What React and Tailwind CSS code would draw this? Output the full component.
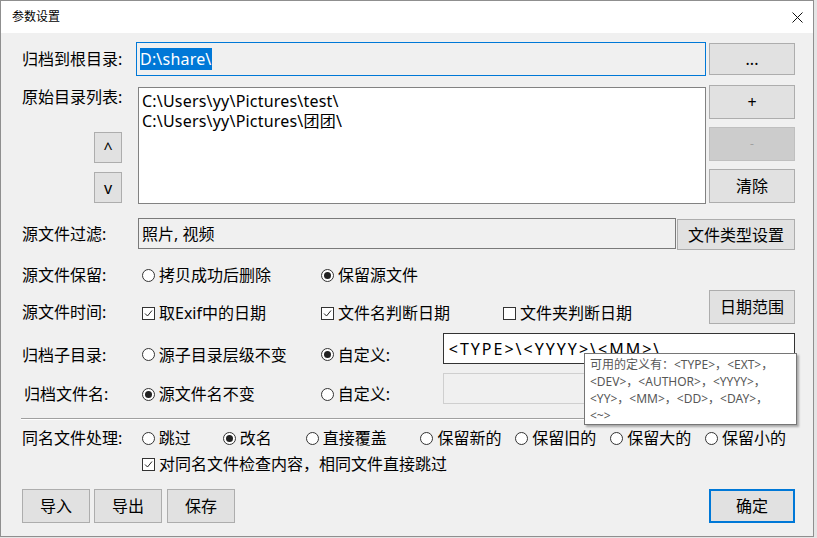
import React from 'react';

const font = { fontFamily: '"Noto Sans", "Noto Sans CJK SC", sans-serif' };

const Btn = ({ children, className = '' }) => (
  <div className={`flex items-center justify-center bg-[#e1e1e1] border border-[#adadad] text-[16px] text-black ${className}`}>
    {children}
  </div>
);

const Radio = ({ checked }) => (
  <span className="w-[13px] h-[13px] rounded-full border border-[#333] bg-white flex items-center justify-center shrink-0">
    {checked && <span className="w-[7px] h-[7px] rounded-full bg-[#222]" />}
  </span>
);

const Check = ({ checked }) => (
  <span className="w-[13px] h-[13px] border border-[#333] bg-white flex items-center justify-center shrink-0">
    {checked && (
      <svg width="11" height="11" viewBox="0 0 11 11">
        <path d="M2 5.5 L4.5 8 L9 2.5" fill="none" stroke="#222" strokeWidth="1" />
      </svg>
    )}
  </span>
);

const Opt = ({ type = 'radio', checked, label, w }) => (
  <div className={`flex items-center gap-[4px] leading-[20px] ${w}`}>
    {type === 'radio' ? <Radio checked={checked} /> : <Check checked={checked} />}
    <span>{label}</span>
  </div>
);

export default function App() {
  return (
    <div className="relative w-[817px] h-[538px] bg-[#e5e5e5] text-black text-[16px]" style={font}>
      <div className="w-[814px] h-[537px] border border-[#8f8f8f] bg-[#f0f0f0] flex flex-col">
        {/* title bar */}
        <div className="h-[32px] bg-white flex items-center justify-between pl-[11px] pr-[10px] shrink-0">
          <span className="text-[12px]">参数设置</span>
          <svg width="11" height="11" viewBox="0 0 11 11">
            <path d="M0.5 0.5 L10.5 10.5 M10.5 0.5 L0.5 10.5" stroke="#111" strokeWidth="1" />
          </svg>
        </div>

        <div className="flex flex-col pl-[21px] pr-[18px]">
          {/* root dir */}
          <div className="flex h-[34px] mt-[9px]">
            <div className="w-[114px] flex items-center">归档到根目录:</div>
            <div className="w-[570px] h-[34px] border border-[#0078d7] bg-[#f0f0f0] flex items-center pl-[3px]">
              <span className="bg-[#0078d7] text-white leading-[22px] tracking-[0.2px]">D:\share\</span>
            </div>
            <Btn className="ml-[3px] w-[86px] h-[32px] mt-[1px]">...</Btn>
          </div>

          {/* source list */}
          <div className="flex mt-[11px]">
            <div className="w-[116px] flex flex-col">
              <span className="leading-[20px]">原始目录列表:</span>
              <Btn className="ml-[72px] mt-[25px] w-[28px] h-[31px] text-[13px]">^</Btn>
              <Btn className="ml-[72px] mt-[9px] w-[28px] h-[31px] text-[14px]">v</Btn>
            </div>
            <div className="w-[568px] h-[117px] border border-[#828282] bg-white px-[3px] pt-[3px] leading-[20px] tracking-[0.2px]">
              <div>C:\Users\yy\Pictures\test\</div>
              <div>C:\Users\yy\Pictures\团团\</div>
            </div>
            <div className="ml-[3px] w-[86px] mt-[-2px] flex flex-col gap-[8px]">
              <Btn className="h-[34px]">+</Btn>
              <div className="h-[34px] bg-[#cccccc] border border-[#bfbfbf] text-[#a0a0a0] flex items-center justify-center text-[12px]">-</div>
              <Btn className="h-[34px]">清除</Btn>
            </div>
          </div>

          {/* filter */}
          <div className="flex h-[32px] mt-[14px]">
            <div className="w-[116px] flex items-center">源文件过滤:</div>
            <div className="w-[538px] h-[31px] border border-[#7a7a7a] bg-[#f0f0f0] flex items-center px-[3px]">照片, 视频</div>
            <Btn className="ml-[1px] w-[118px] h-[31px] mt-[1px]">文件类型设置</Btn>
          </div>

          {/* keep */}
          <div className="flex h-[20px] mt-[15px] leading-[20px]">
            <div className="w-[120px]">源文件保留:</div>
            <Opt label="拷贝成功后删除" w="w-[179px]" />
            <Opt checked label="保留源文件" w="w-[150px]" />
          </div>

          {/* time */}
          <div className="flex h-[34px] mt-[5px]">
            <div className="w-[120px] pt-[12px] leading-[20px]">源文件时间:</div>
            <div className="pt-[12px] flex">
              <Opt type="check" checked label="取Exif中的日期" w="w-[179px]" />
              <Opt type="check" checked label="文件名判断日期" w="w-[182px]" />
              <Opt type="check" label="文件夹判断日期" w="w-[160px]" />
            </div>
            <Btn className="ml-auto w-[86px] h-[34px]">日期范围</Btn>
          </div>

          {/* sub dir */}
          <div className="flex h-[31px] mt-[9px]">
            <div className="w-[120px] pt-[12px] leading-[20px]">归档子目录:</div>
            <div className="pt-[12px] flex">
              <Opt label="源子目录层级不变" w="w-[179px]" />
              <Opt checked label="自定义:" w="w-[122px]" />
            </div>
            <div className="w-[353px] h-[31px] border border-[#333] bg-white flex items-center px-[5px] tracking-[2px]">&lt;TYPE&gt;\&lt;YYYY&gt;\&lt;MM&gt;\</div>
          </div>

          {/* file name */}
          <div className="flex h-[31px] mt-[9px]">
            <div className="w-[120px] pt-[11px] pl-[2px] leading-[20px]">归档文件名:</div>
            <div className="pt-[11px] flex">
              <Opt checked label="源文件名不变" w="w-[179px]" />
              <Opt label="自定义:" w="w-[122px]" />
            </div>
            <div className="w-[353px] h-[31px] border border-[#cfcfcf] bg-[#f0f0f0]" />
          </div>

          <div className="mt-[14px] ml-[-1px] w-[775px] border-t border-[#a0a0a0] border-b border-b-white" />

          {/* same name */}
          <div className="flex h-[20px] mt-[8px] leading-[20px]">
            <div className="w-[120px]">同名文件处理:</div>
            <Opt label="跳过" w="w-[81px]" />
            <Opt checked label="改名" w="w-[83px]" />
            <Opt label="直接覆盖" w="w-[115px]" />
            <Opt label="保留新的" w="w-[95px]" />
            <Opt label="保留旧的" w="w-[95px]" />
            <Opt label="保留大的" w="w-[95px]" />
            <Opt label="保留小的" w="w-[90px]" />
          </div>
          <div className="flex h-[20px] mt-[6px] pl-[120px]">
            <Opt type="check" checked label="对同名文件检查内容，相同文件直接跳过" w="" />
          </div>

          {/* bottom */}
          <div className="flex h-[34px] mt-[15px]">
            <Btn className="w-[68px] h-[34px]">导入</Btn>
            <Btn className="ml-[4px] w-[68px] h-[34px]">导出</Btn>
            <Btn className="ml-[5px] w-[68px] h-[34px]">保存</Btn>
            <div className="ml-auto w-[86px] h-[34px] bg-[#e1e1e1] border-2 border-[#0078d7] flex items-center justify-center">确定</div>
          </div>
        </div>
      </div>

      {/* tooltip */}
      <div className="absolute left-[584px] top-[353px] w-[213px] h-[72px] bg-white border border-[#767676] shadow-[2px_2px_2px_rgba(0,0,0,0.3)] pl-[5px] pt-[2px] text-[12px] leading-[17px] text-[#575757]">
        <div>可用的定义有：&lt;TYPE&gt;，&lt;EXT&gt;，</div>
        <div>&lt;DEV&gt;，&lt;AUTHOR&gt;，&lt;YYYY&gt;，</div>
        <div>&lt;YY&gt;，&lt;MM&gt;，&lt;DD&gt;，&lt;DAY&gt;，</div>
        <div>&lt;~&gt;</div>
      </div>
    </div>
  );
}
